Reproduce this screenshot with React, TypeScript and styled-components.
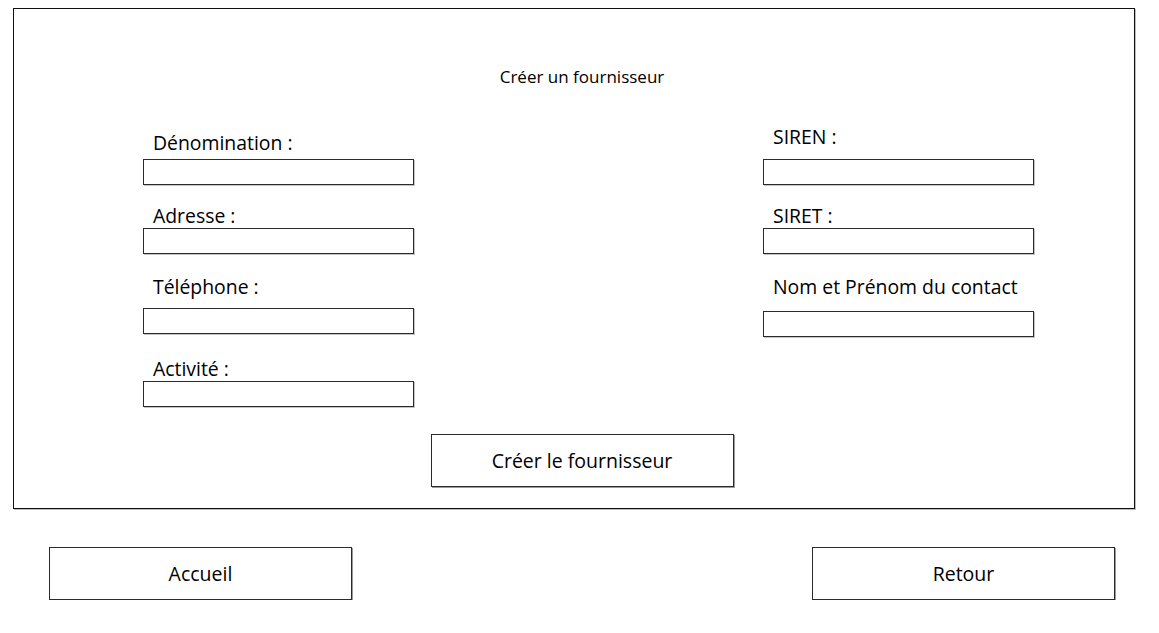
import React from 'react';
import styled, { createGlobalStyle } from 'styled-components';

const GlobalStyle = createGlobalStyle`
  body {
    margin: 0;
    background: #ffffff;
    color: #000000;
    font-family: "Open Sans", "Noto Sans", sans-serif;
  }
  * {
    box-sizing: border-box;
  }
`;

const Page = styled.div`
  padding: 8px 0 0 13px;
  width: 1159px;
`;

const Frame = styled.section`
  border: 1px solid #111;
  box-shadow: 1px 1px 0 #bdbdbd;
  display: flex;
  flex-direction: column;
  height: 501px;
  padding: 0 0 0 16px;
  width: 1122px;
`;

const Title = styled.h1`
  font-size: 17px;
  font-weight: 400;
  line-height: 22px;
  margin: 57px 0 0;
  text-align: center;
`;

const Columns = styled.div`
  display: flex;
  justify-content: space-between;
  margin-top: 37px;
  padding: 0 100px 0 113px;
`;

const Column = styled.div`
  display: flex;
  flex-direction: column;
  width: 271px;
`;

const Field = styled.div<{ $top: number; $gap: number }>`
  display: flex;
  flex-direction: column;
  gap: ${(p) => p.$gap}px;
  margin-top: ${(p) => p.$top}px;
`;

const Label = styled.label`
  display: block;
  font-size: 19.4px;
  height: 24px;
  line-height: 24px;
  padding-left: 10px;
  white-space: nowrap;
`;

const Input = styled.input`
  border: 1px solid #2b2b2b;
  box-shadow: 1px 1px 0 #c4c4c4;
  display: block;
  height: 26px;
  margin: 0;
  outline: none;
  padding: 0 6px;
  width: 271px;
`;

const Button = styled.button`
  background: #ffffff;
  border: 1px solid #2b2b2b;
  box-shadow: 1px 1px 0 #9a9a9a;
  color: #000;
  cursor: pointer;
  font-family: "Open Sans", "Noto Sans", sans-serif;
  font-size: 19.5px;
  height: 53px;
  padding: 0;
  width: 303px;
`;

const SubmitRow = styled.div`
  display: flex;
  justify-content: center;
  margin-top: 27px;
`;

const Footer = styled.div`
  display: flex;
  justify-content: space-between;
  margin-top: 38px;
  padding: 0 20px 0 36px;
  width: 1122px;
`;

type FieldDef = { label: string; top: number; gap: number };

const leftFields: FieldDef[] = [
  { label: 'Dénomination :', top: 6, gap: 4 },
  { label: 'Adresse :', top: 19, gap: 0 },
  { label: 'Téléphone :', top: 21, gap: 9 },
  { label: 'Activité :', top: 23, gap: 0 },
];

const rightFields: FieldDef[] = [
  { label: 'SIREN :', top: 0, gap: 10 },
  { label: 'SIRET :', top: 19, gap: 0 },
  { label: 'Nom et Prénom du contact', top: 21, gap: 12 },
];

const FieldList: React.FC<{ fields: FieldDef[] }> = ({ fields }) => (
  <Column>
    {fields.map((f) => (
      <Field key={f.label} $top={f.top} $gap={f.gap}>
        <Label>{f.label}</Label>
        <Input type="text" />
      </Field>
    ))}
  </Column>
);

const App: React.FC = () => (
  <Page>
    <GlobalStyle />
    <Frame>
      <Title>Créer un fournisseur</Title>
      <Columns>
        <FieldList fields={leftFields} />
        <FieldList fields={rightFields} />
      </Columns>
      <SubmitRow>
        <Button>Créer le fournisseur</Button>
      </SubmitRow>
    </Frame>
    <Footer>
      <Button>Accueil</Button>
      <Button>Retour</Button>
    </Footer>
  </Page>
);

export default App;
